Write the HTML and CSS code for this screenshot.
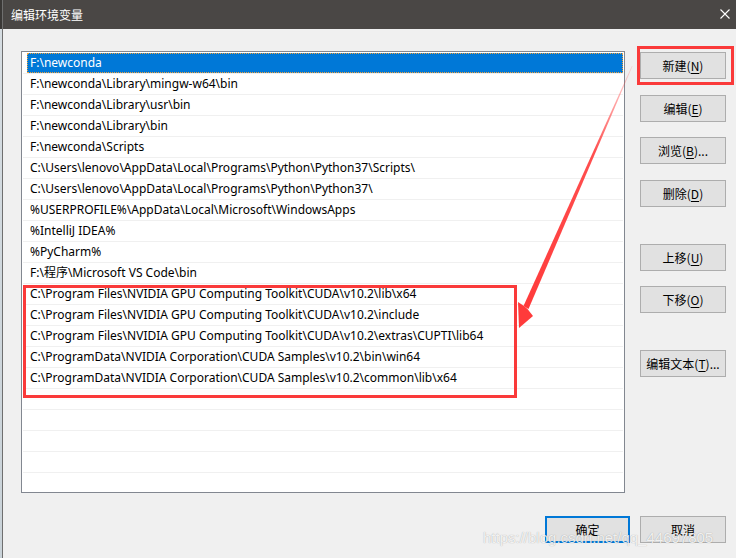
FILE: index.html
```html
<!DOCTYPE html>
<html lang="zh-CN">
<head>
<meta charset="utf-8">
<title>编辑环境变量</title>
<link rel="stylesheet" href="styles.css">
</head>
<body>
<div class="screen">
  <div class="strip"></div>
  <div class="dialog">
    <div class="titlebar">
      <span class="title">编辑环境变量</span>
      <svg class="close" width="10" height="10" viewBox="0 0 10 10"><path d="M0.5 0.5 L9.5 9.5 M9.5 0.5 L0.5 9.5" stroke="#ffffff" stroke-width="1.1" fill="none"/></svg>
    </div>
    <div class="main">
      <div class="list">
        <div class="row selected"><div class="cell">F:\newconda</div></div>
        <div class="row"><div class="cell">F:\newconda\Library\mingw-w64\bin</div></div>
        <div class="row"><div class="cell">F:\newconda\Library\usr\bin</div></div>
        <div class="row"><div class="cell">F:\newconda\Library\bin</div></div>
        <div class="row"><div class="cell">F:\newconda\Scripts</div></div>
        <div class="row"><div class="cell">C:\Users\lenovo\AppData\Local\Programs\Python\Python37\Scripts\</div></div>
        <div class="row"><div class="cell">C:\Users\lenovo\AppData\Local\Programs\Python\Python37\</div></div>
        <div class="row"><div class="cell">%USERPROFILE%\AppData\Local\Microsoft\WindowsApps</div></div>
        <div class="row"><div class="cell">%IntelliJ IDEA%</div></div>
        <div class="row"><div class="cell">%PyCharm%</div></div>
        <div class="row"><div class="cell">F:\程序\Microsoft VS Code\bin</div></div>
        <div class="row"><div class="cell">C:\Program Files\NVIDIA GPU Computing Toolkit\CUDA\v10.2\lib\x64</div></div>
        <div class="row"><div class="cell">C:\Program Files\NVIDIA GPU Computing Toolkit\CUDA\v10.2\include</div></div>
        <div class="row"><div class="cell">C:\Program Files\NVIDIA GPU Computing Toolkit\CUDA\v10.2\extras\CUPTI\lib64</div></div>
        <div class="row"><div class="cell">C:\ProgramData\NVIDIA Corporation\CUDA Samples\v10.2\bin\win64</div></div>
        <div class="row"><div class="cell">C:\ProgramData\NVIDIA Corporation\CUDA Samples\v10.2\common\lib\x64</div></div>
        <div class="row"><div class="cell"></div></div>
        <div class="row"><div class="cell"></div></div>
        <div class="row"><div class="cell"></div></div>
        <div class="row"><div class="cell"></div></div>
        <div class="row"><div class="cell"></div></div>
      </div>
      <div class="buttons">
        <div class="btn">新建(<u>N</u>)</div>
        <div class="btn plus">编辑(<u>E</u>)</div>
        <div class="btn">浏览(<u>B</u>)...</div>
        <div class="btn plus">删除(<u>D</u>)</div>
        <div class="btn sep">上移(<u>U</u>)</div>
        <div class="btn">下移(<u>O</u>)</div>
        <div class="btn sep">编辑文本(<u>T</u>)...</div>
      </div>
    </div>
    <div class="footer">
      <div class="btn ok">确定</div>
      <div class="btn">取消</div>
    </div>
  </div>
</div>

<div class="mark mark-rows"></div>
<div class="mark mark-new"></div>
<svg class="arrow" width="736" height="558" viewBox="0 0 736 558">
  <defs>
    <linearGradient id="fade" x1="632" y1="66" x2="525" y2="310" gradientUnits="userSpaceOnUse">
      <stop offset="0" stop-color="#ff3b3b" stop-opacity="0.15"/>
      <stop offset="0.35" stop-color="#ff3b3b" stop-opacity="0.9"/>
      <stop offset="1" stop-color="#ff3b3b" stop-opacity="1"/>
    </linearGradient>
  </defs>
  <polygon points="632.6,66 631.8,66 523.5,306 528.5,309" fill="url(#fade)"/>
  <polygon points="519,328 518,302 524,306 527.5,309 533,316" fill="#ff3b3b"/>
</svg>
<div class="watermark">https://blog.csdn.net/qq_44697805</div>
</body>
</html>
```

FILE: styles.css
```css
* { box-sizing: border-box; }
html, body {
  margin: 0;
  padding: 0;
  width: 736px;
  height: 558px;
  overflow: hidden;
}
body {
  position: relative;
  background: #f0f0f0;
  font-family: "Noto Sans", "Noto Sans CJK SC", sans-serif;
  font-size: 12px;
  color: #000;
}
.screen {
  display: flex;
  width: 736px;
  height: 558px;
}
.strip {
  width: 2px;
  background: linear-gradient(to bottom, #3a3836 0, #3a3836 29px, #d6dde2 29px, #c9d2d8 100%);
}
.dialog {
  flex: 1;
  display: flex;
  flex-direction: column;
  border-left: 1px solid #6f6f6f;
  background: #f0f0f0;
}
.titlebar {
  height: 29px;
  background: #4a4745;
  color: #fff;
  display: flex;
  align-items: center;
  justify-content: space-between;
  padding: 0 6px 0 8px;
  font-family: "Noto Sans CJK SC", sans-serif;
  font-size: 12px;
}
.close { display: block; margin-top: -1px; }
.main {
  display: flex;
  gap: 15px;
  padding: 22px 0 0 18px;
}
.list {
  width: 604px;
  height: 442px;
  border: 1px solid #828790;
  background: #fff;
  padding: 1px;
  overflow: hidden;
}
.row {
  height: 21px;
  border-bottom: 1px solid #f0f0f0;
}
.cell {
  height: 20px;
  margin-left: 4px;
  padding-left: 3px;
  line-height: 20px;
  white-space: nowrap;
}
.selected .cell {
  background: #0078d7;
  color: #fff;
  outline: 1px dotted #f0a23c;
  outline-offset: -1px;
}
.buttons {
  display: flex;
  flex-direction: column;
  gap: 15px;
  padding-top: 1px;
}
.btn {
  width: 86px;
  height: 27px;
  background: #e1e1e1;
  border: 1px solid #adadad;
  display: flex;
  align-items: center;
  justify-content: center;
  font-family: "Noto Sans CJK SC", sans-serif;
  font-size: 12px;
  color: #000;
}
.btn u { text-underline-offset: 2px; }
.buttons .plus { margin-top: 1px; }
.buttons .sep { margin-top: 22px; }
.footer {
  display: flex;
  justify-content: flex-end;
  gap: 10px;
  padding: 23px 10px 0 0;
}
.footer .ok {
  width: 85px;
  border: 2px solid #0078d7;
}
.mark {
  position: absolute;
  border: 3px solid #fa3a3a;
}
.mark-rows {
  left: 23px;
  top: 285px;
  width: 494px;
  height: 113px;
}
.mark-new {
  left: 637px;
  top: 46px;
  width: 97px;
  height: 39px;
}
.arrow {
  position: absolute;
  left: 0;
  top: 0;
  pointer-events: none;
}
.watermark {
  position: absolute;
  left: 483px;
  top: 529px;
  font-family: "Liberation Sans", sans-serif;
  font-size: 15px;
  color: rgba(255, 255, 255, 0.85);
  text-shadow: 0 0 1px rgba(0, 0, 0, 0.35);
  white-space: nowrap;
}
```
